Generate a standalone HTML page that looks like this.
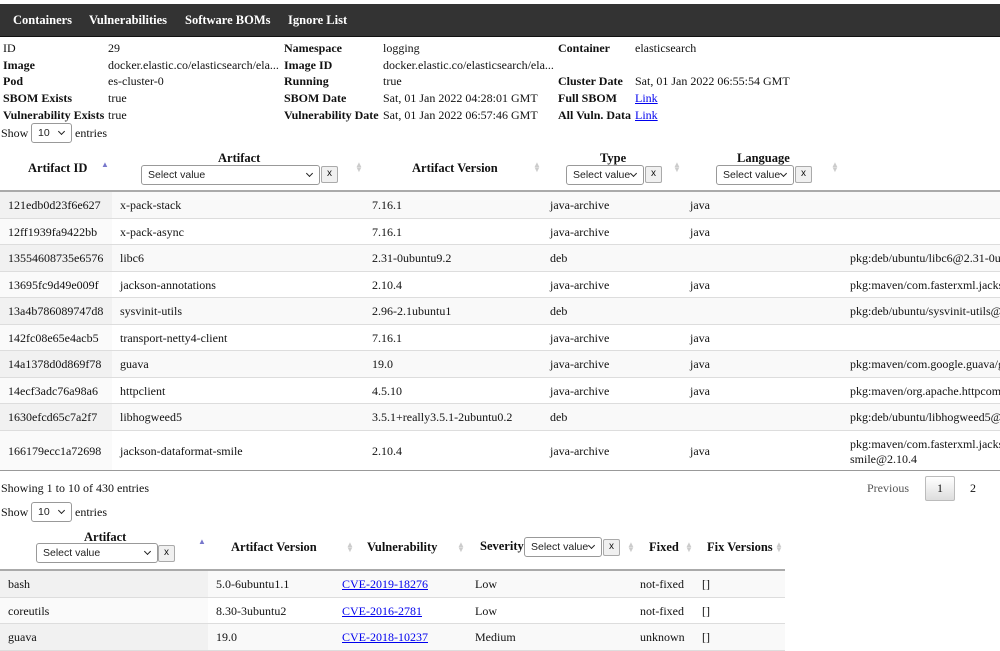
<!DOCTYPE html>
<html><head><meta charset="utf-8"><style>
*{margin:0;padding:0;box-sizing:border-box}
body{width:1000px;height:645px;overflow:hidden;background:#fff;font-family:"Liberation Serif",serif;font-size:12px;color:#111;position:relative}
.a{position:absolute;white-space:nowrap}
b,.b{font-weight:bold}
.nav{position:absolute;left:0;top:4px;width:1000px;height:33px;background:#333;border-bottom:1px solid #111}
.nav span{position:absolute;top:9px;color:#fff;font-weight:bold;font-size:12.5px}
.sel{position:absolute;height:20px;border:1px solid #999;border-radius:3px;background:#fff;font-family:"Liberation Sans",sans-serif;font-size:10.5px;padding:3px 0 0 6px;color:#222;overflow:hidden}
.sel:after{content:"";position:absolute;right:7px;top:5px;width:4px;height:4px;border-right:1.5px solid #222;border-bottom:1.5px solid #222;transform:rotate(45deg);background:#fff}
.x{position:absolute;height:17px;width:17px;border:1px solid #aaa;border-radius:2px;background:#f0f0f0;font-family:"Liberation Sans",sans-serif;font-size:10px;text-align:center;line-height:14px}
.row{position:absolute;left:0;border-bottom:1px solid #ddd}
.sort{position:absolute;color:#ccc;font-size:8px;line-height:5px}
a{color:#00e}
.h{font-size:12.5px}
</style></head><body>
<div class="nav"><span style="left:13px">Containers</span><span style="left:89px">Vulnerabilities</span><span style="left:185px">Software BOMs</span><span style="left:288px">Ignore List</span></div>

<div class="a" style="left:3px;top:40px;line-height:16.7px">ID<br><b>Image</b><br><b>Pod</b><br><b>SBOM Exists</b><br><b>Vulnerability Exists</b></div>
<div class="a" style="left:108px;top:40px;line-height:16.7px">29<br>docker.elastic.co/elasticsearch/ela...<br>es-cluster-0<br>true<br>true</div>
<div class="a" style="left:284px;top:40px;line-height:16.7px"><b>Namespace</b><br><b>Image ID</b><br><b>Running</b><br><b>SBOM Date</b><br><b>Vulnerability Date</b></div>
<div class="a" style="left:383px;top:40px;line-height:16.7px">logging<br>docker.elastic.co/elasticsearch/ela...<br>true<br>Sat, 01 Jan 2022 04:28:01 GMT<br>Sat, 01 Jan 2022 06:57:46 GMT</div>
<div class="a" style="left:558px;top:40px;line-height:16.7px"><b>Container</b><br><br><b>Cluster Date</b><br><b>Full SBOM</b><br><b>All Vuln. Data</b></div>
<div class="a" style="left:635px;top:40px;line-height:16.7px">elasticsearch<br><br>Sat, 01 Jan 2022 06:55:54 GMT<br><a href="#">Link</a><br><a href="#">Link</a></div>

<div class="a" style="left:1px;top:126px">Show</div>
<div class="sel" style="left:31px;top:123px;width:41px">10</div>
<div class="a" style="left:75px;top:126px">entries</div>

<div class="a b h" style="left:28px;top:161px">Artifact ID</div>
<div class="a" style="left:101px;top:160px;color:#77c;font-size:8px">▲</div>
<div class="a b h" style="left:218px;top:151px">Artifact</div>
<div class="sel" style="left:141px;top:165px;width:179px">Select value</div><div class="x" style="left:321px;top:166px">x</div>
<div class="sort" style="left:355px;top:162px">▲<br>▼</div>
<div class="a b h" style="left:412px;top:161px">Artifact Version</div>
<div class="sort" style="left:533px;top:162px">▲<br>▼</div>
<div class="a b h" style="left:600px;top:151px">Type</div>
<div class="sel" style="left:566px;top:165px;width:78px">Select value</div><div class="x" style="left:645px;top:166px">x</div>
<div class="sort" style="left:673px;top:162px">▲<br>▼</div>
<div class="a b h" style="left:737px;top:151px">Language</div>
<div class="sel" style="left:716px;top:165px;width:78px">Select value</div><div class="x" style="left:795px;top:166px">x</div>
<div class="sort" style="left:831px;top:162px">▲<br>▼</div>
<div style="position:absolute;left:0;top:190px;width:1000px;height:2px;background:#aaa"></div>

<div style="position:absolute;left:0;top:192px;width:1000px">
<div class="row" style="top:0;height:27px;width:1000px;background:#f9f9f9"><div style="position:absolute;left:0;top:0;width:112px;height:26px;background:#f1f1f1"></div></div>
<div class="row" style="top:27px;height:26px;width:1000px;background:#fff"><div style="position:absolute;left:0;top:0;width:112px;height:25px;background:#fafafa"></div></div>
<div class="row" style="top:53px;height:27px;width:1000px;background:#f9f9f9"><div style="position:absolute;left:0;top:0;width:112px;height:26px;background:#f1f1f1"></div></div>
<div class="row" style="top:80px;height:26px;width:1000px;background:#fff"><div style="position:absolute;left:0;top:0;width:112px;height:25px;background:#fafafa"></div></div>
<div class="row" style="top:106px;height:27px;width:1000px;background:#f9f9f9"><div style="position:absolute;left:0;top:0;width:112px;height:26px;background:#f1f1f1"></div></div>
<div class="row" style="top:133px;height:26px;width:1000px;background:#fff"><div style="position:absolute;left:0;top:0;width:112px;height:25px;background:#fafafa"></div></div>
<div class="row" style="top:159px;height:27px;width:1000px;background:#f9f9f9"><div style="position:absolute;left:0;top:0;width:112px;height:26px;background:#f1f1f1"></div></div>
<div class="row" style="top:186px;height:26px;width:1000px;background:#fff"><div style="position:absolute;left:0;top:0;width:112px;height:25px;background:#fafafa"></div></div>
<div class="row" style="top:212px;height:27px;width:1000px;background:#f9f9f9"><div style="position:absolute;left:0;top:0;width:112px;height:26px;background:#f1f1f1"></div></div>
<div class="row" style="top:239px;height:40px;width:1000px;background:#fff;border-bottom:1px solid #999"><div style="position:absolute;left:0;top:0;width:112px;height:39px;background:#fafafa"></div></div>
</div>
<div class="a" style="left:8px;top:192px;line-height:26.5px">121edb0d23f6e627<br>12ff1939fa9422bb<br>13554608735e6576<br>13695fc9d49e009f<br>13a4b786089747d8<br>142fc08e65e4acb5<br>14a1378d0d869f78<br>14ecf3adc76a98a6<br>1630efcd65c7a2f7</div>
<div class="a" style="left:120px;top:192px;line-height:26.5px">x-pack-stack<br>x-pack-async<br>libc6<br>jackson-annotations<br>sysvinit-utils<br>transport-netty4-client<br>guava<br>httpclient<br>libhogweed5</div>
<div class="a" style="left:372px;top:192px;line-height:26.5px">7.16.1<br>7.16.1<br>2.31-0ubuntu9.2<br>2.10.4<br>2.96-2.1ubuntu1<br>7.16.1<br>19.0<br>4.5.10<br>3.5.1+really3.5.1-2ubuntu0.2</div>
<div class="a" style="left:550px;top:192px;line-height:26.5px">java-archive<br>java-archive<br>deb<br>java-archive<br>deb<br>java-archive<br>java-archive<br>java-archive<br>deb</div>
<div class="a" style="left:690px;top:192px;line-height:26.5px">java<br>java<br><br>java<br><br>java<br>java<br>java<br></div>
<div class="a" style="left:850px;top:192px;line-height:26.5px"><br><br>pkg:deb/ubuntu/libc6@2.31-0ubuntu9.2<br>pkg:maven/com.fasterxml.jackson<br>pkg:deb/ubuntu/sysvinit-utils@2.96<br><br>pkg:maven/com.google.guava/guava<br>pkg:maven/org.apache.httpcomponents<br>pkg:deb/ubuntu/libhogweed5@3.5.1</div>
<div class="a" style="left:8px;top:444px">166179ecc1a72698</div>
<div class="a" style="left:120px;top:444px">jackson-dataformat-smile</div>
<div class="a" style="left:372px;top:444px">2.10.4</div>
<div class="a" style="left:550px;top:444px">java-archive</div>
<div class="a" style="left:690px;top:444px">java</div>
<div class="a" style="left:850px;top:437px;line-height:15px">pkg:maven/com.fasterxml.jackson<br>smile@2.10.4</div>

<div class="a" style="left:1px;top:481px">Showing 1 to 10 of 430 entries</div>
<div class="a" style="left:867px;top:481px;color:#555">Previous</div>
<div style="position:absolute;left:925px;top:476px;width:30px;height:25px;border:1px solid #bbb;border-radius:2px;background:linear-gradient(#fff,#ddd)"></div>
<div class="a" style="left:937px;top:481px">1</div>
<div class="a" style="left:970px;top:481px">2</div>

<div class="a" style="left:1px;top:505px">Show</div>
<div class="sel" style="left:31px;top:502px;width:41px">10</div>
<div class="a" style="left:75px;top:505px">entries</div>

<div class="a b h" style="left:84px;top:530px">Artifact</div>
<div class="sel" style="left:36px;top:543px;width:122px">Select value</div><div class="x" style="left:158px;top:545px">x</div>
<div class="a" style="left:198px;top:537px;color:#77c;font-size:8px">▲</div>
<div class="a b h" style="left:231px;top:540px">Artifact Version</div>
<div class="sort" style="left:346px;top:542px">▲<br>▼</div>
<div class="a b h" style="left:367px;top:540px">Vulnerability</div>
<div class="sort" style="left:457px;top:542px">▲<br>▼</div>
<div class="a b h" style="left:480px;top:539px">Severity</div>
<div class="sel" style="left:524px;top:537px;width:78px">Select value</div><div class="x" style="left:603px;top:539px">x</div>
<div class="sort" style="left:627px;top:542px">▲<br>▼</div>
<div class="a b h" style="left:649px;top:540px">Fixed</div>
<div class="sort" style="left:685px;top:542px">▲<br>▼</div>
<div class="a b h" style="left:707px;top:540px">Fix Versions</div>
<div class="sort" style="left:775px;top:542px">▲<br>▼</div>
<div style="position:absolute;left:0;top:569px;width:785px;height:2px;background:#aaa"></div>
<div class="row" style="top:571px;height:27px;width:785px;background:#f9f9f9"><div style="position:absolute;left:0;top:0;width:208px;height:26px;background:#f1f1f1"></div></div>
<div class="row" style="top:598px;height:26px;width:785px;background:#fff"><div style="position:absolute;left:0;top:0;width:208px;height:25px;background:#fafafa"></div></div>
<div class="row" style="top:624px;height:27px;width:785px;background:#f9f9f9"><div style="position:absolute;left:0;top:0;width:208px;height:26px;background:#f1f1f1"></div></div>
<div class="a" style="left:8px;top:571px;line-height:26.5px">bash<br>coreutils<br>guava</div>
<div class="a" style="left:216px;top:571px;line-height:26.5px">5.0-6ubuntu1.1<br>8.30-3ubuntu2<br>19.0</div>
<div class="a" style="left:342px;top:571px;line-height:26.5px"><a href="#">CVE-2019-18276</a><br><a href="#">CVE-2016-2781</a><br><a href="#">CVE-2018-10237</a></div>
<div class="a" style="left:475px;top:571px;line-height:26.5px">Low<br>Low<br>Medium</div>
<div class="a" style="left:640px;top:571px;line-height:26.5px">not-fixed<br>not-fixed<br>unknown</div>
<div class="a" style="left:702px;top:571px;line-height:26.5px">[]<br>[]<br>[]</div>
</body></html>
